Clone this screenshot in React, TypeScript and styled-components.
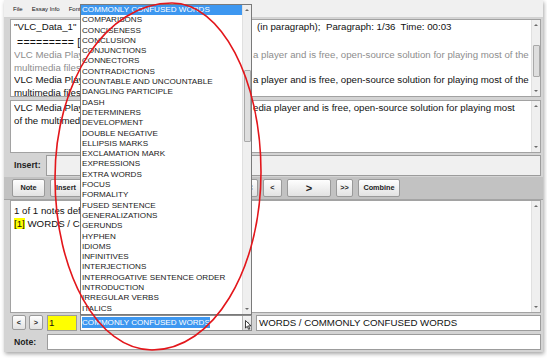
import React from 'react';
import styled, { createGlobalStyle } from 'styled-components';

const GlobalStyle = createGlobalStyle`
  html, body {
    margin: 0;
    padding: 0;
    background: #fff;
  }
  body {
    font-family: 'Liberation Sans', Arial, sans-serif;
  }
  * {
    box-sizing: border-box;
  }
`;

const Page = styled.div`
  position: relative;
  width: 547px;
  height: 358px;
  padding: 0 4px;
  overflow: hidden;
`;

const Window = styled.div`
  position: relative;
  display: flex;
  flex-direction: column;
  width: 539px;
  height: 352px;
  background: #d4d4d4;
  box-shadow: 1px 2px 4px rgba(0, 0, 0, 0.35);
`;

const MenuBar = styled.div`
  display: flex;
  align-items: center;
  gap: 9px;
  height: 18px;
  padding-left: 9px;
  background: #f0f0f0;
  border-bottom: 1px solid #d2d2d2;
  font-size: 6px;
  color: #111;
`;

const Content = styled.div`
  display: flex;
  flex-direction: column;
  padding: 1px 2px 0 6px;
`;

const Pane = styled.div<{ $h: number; $gap?: number }>`
  display: flex;
  height: ${(p) => p.$h}px;
  margin-top: ${(p) => p.$gap ?? 0}px;
  background: #fff;
  border: 1px solid #a2a2a2;
`;

const PaneText = styled.div<{ $pt: number }>`
  flex: 1;
  min-width: 0;
  overflow: hidden;
  padding: ${(p) => p.$pt}px 0 0 3px;
  font-size: 9.7px;
  line-height: 12.5px;
  color: #111;
`;

const Line = styled.div<{ $dim?: boolean; $mt?: number }>`
  white-space: pre;
  margin-top: ${(p) => p.$mt ?? 0}px;
  color: ${(p) => (p.$dim ? '#8d8d8d' : '#111')};
`;

const Rule = styled.span`
  font-size: 10.5px;
  letter-spacing: 0.2px;
`;

// start of a line that lies under the open drop-down; its width fixes where the rest begins
const Under = styled.span<{ $w: number }>`
  display: inline-block;
  width: ${(p) => p.$w}px;
  overflow: hidden;
  vertical-align: top;
`;

const Mark = styled.span`
  background: #ffff00;
`;

const ScrollBar = styled.div`
  display: flex;
  flex-direction: column;
  width: 9px;
  background: #efefef;
  border-left: 1px solid #e0e0e0;
`;

const ArrowCell = styled.div`
  display: flex;
  align-items: center;
  justify-content: center;
  height: 10px;
`;

const Tri = styled.span<{ $dir: 'up' | 'down' }>`
  width: 0;
  height: 0;
  border-left: 2px solid transparent;
  border-right: 2px solid transparent;
  ${(p) => (p.$dir === 'up' ? 'border-bottom: 2px solid #6a6a6a;' : 'border-top: 2px solid #6a6a6a;')}
`;

const Track = styled.div`
  flex: 1;
  display: flex;
  flex-direction: column;
  align-items: center;
`;

const Thumb = styled.div<{ $top: number; $h: number }>`
  margin-top: ${(p) => p.$top}px;
  width: 7px;
  height: ${(p) => p.$h}px;
  background: #dedede;
  border: 1px solid #a9a9a9;
  border-radius: 1px;
`;

const FieldRow = styled.div<{ $h: number }>`
  display: flex;
  align-items: center;
  height: ${(p) => p.$h}px;
`;

const Label = styled.span<{ $w: number }>`
  width: ${(p) => p.$w}px;
  padding-left: 4px;
  font-size: 8.7px;
  font-weight: bold;
  color: #222;
`;

const Field = styled.div<{ $h: number; $tone?: 'plain' | 'muted' | 'mark'; $w?: number }>`
  display: flex;
  align-items: center;
  ${(p) => (p.$w ? `width: ${p.$w}px;` : 'flex: 1;')}
  height: ${(p) => p.$h}px;
  padding-left: 1px;
  border: 1px solid #9c9c9c;
  background: ${(p) => (p.$tone === 'muted' ? '#f0f0f0' : p.$tone === 'mark' ? '#ffff00' : '#fff')};
  font-size: 9.7px;
  color: #111;
  white-space: nowrap;
  overflow: hidden;
`;

const ButtonRow = styled.div`
  display: flex;
  align-items: center;
  gap: 5px;
  height: 23px;
  margin: 0 -2px 0 -6px;
  padding: 0 0 1px 8px;
  background: #c2c2c2;
  border-bottom: 1px solid #a4a4a4;
`;

const Button = styled.button<{ $w: number; $h?: number; $big?: boolean }>`
  display: flex;
  align-items: center;
  justify-content: center;
  flex-shrink: 0;
  width: ${(p) => p.$w}px;
  height: ${(p) => p.$h ?? 18}px;
  padding: 0;
  border: 1px solid #9a9a9a;
  border-radius: 2px;
  background: linear-gradient(#fefefe, #e2e2e2);
  font-family: inherit;
  font-size: ${(p) => (p.$big ? 11 : 7.3)}px;
  font-weight: bold;
  color: #222;
`;

const NavButton = styled(Button)<{ $ml: number }>`
  margin-left: ${(p) => p.$ml}px;
`;

const Combo = styled.div`
  position: relative;
  display: flex;
  width: 172px;
  height: 16px;
  margin-left: 3px;
  border: 1px solid #8c8c8c;
  background: #fff;
`;

const ComboText = styled.div`
  flex: 1;
  display: flex;
  align-items: center;
  padding-left: 1px;
  font-size: 8.1px;
`;

const Selected = styled.span`
  background: #3d97f0;
  color: #fff;
  line-height: 11px;
`;

const ComboButton = styled.div`
  position: relative;
  display: flex;
  align-items: center;
  justify-content: center;
  width: 9px;
  background: linear-gradient(#f4f4f4, #dcdcdc);
  border-left: 1px solid #b4b4b4;
`;

const Cursor = styled.svg`
  position: absolute;
  left: 2px;
  top: 4px;
`;

const PageField = styled(Field)`
  margin-left: 4px;
`;

const PathField = styled(Field)`
  margin-left: 4px;
  padding-left: 2px;
`;

const DropList = styled.div`
  position: absolute;
  left: 76px;
  top: 4px;
  display: flex;
  width: 172px;
  height: 311px;
  background: #fff;
  border: 1px solid #7a7a7a;
`;

const Items = styled.div`
  flex: 1;
`;

const Item = styled.div<{ $on?: boolean }>`
  height: 10.3px;
  padding-left: 1px;
  font-size: 8.1px;
  line-height: 10.3px;
  white-space: nowrap;
  color: ${(p) => (p.$on ? '#fff' : '#1a1a1a')};
  background: ${(p) => (p.$on ? '#3d97f0' : 'transparent')};
`;

const Ring = styled.svg`
  position: absolute;
  left: 0;
  top: 0;
  pointer-events: none;
`;

const topics = [
  'COMMONLY CONFUSED WORDS',
  'COMPARISONS',
  'CONCISENESS',
  'CONCLUSION',
  'CONJUNCTIONS',
  'CONNECTORS',
  'CONTRADICTIONS',
  'COUNTABLE AND UNCOUNTABLE',
  'DANGLING PARTICIPLE',
  'DASH',
  'DETERMINERS',
  'DEVELOPMENT',
  'DOUBLE NEGATIVE',
  'ELLIPSIS MARKS',
  'EXCLAMATION MARK',
  'EXPRESSIONS',
  'EXTRA WORDS',
  'FOCUS',
  'FORMALITY',
  'FUSED SENTENCE',
  'GENERALIZATIONS',
  'GERUNDS',
  'HYPHEN',
  'IDIOMS',
  'INFINITIVES',
  'INTERJECTIONS',
  'INTERROGATIVE SENTENCE ORDER',
  'INTRODUCTION',
  'IRREGULAR VERBS',
  'ITALICS',
];

const toolButtons = [
  { label: 'Note', w: 33 },
  { label: 'Insert', w: 32 },
  { label: 'Delete', w: 36 },
  { label: 'Clear', w: 34 },
  { label: 'Undo', w: 34 },
  { label: 'Redo', w: 28 },
  { label: '<<', w: 19 },
  { label: '<', w: 19 },
  { label: '>', w: 44, big: true },
  { label: '>>', w: 17 },
  { label: 'Combine', w: 42 },
];

const Scroll = ({ thumb }: { thumb?: [number, number] }) => (
  <ScrollBar>
    <ArrowCell>
      <Tri $dir="up" />
    </ArrowCell>
    <Track>{thumb && <Thumb $top={thumb[0]} $h={thumb[1]} />}</Track>
    <ArrowCell>
      <Tri $dir="down" />
    </ArrowCell>
  </ScrollBar>
);

const App = () => {
  return (
    <Page>
      <GlobalStyle />
      <Window>
        <MenuBar>
          <span>File</span>
          <span>Essay Info</span>
          <span>Font</span>
        </MenuBar>

        <Content>
          <Pane $h={78}>
            <PaneText $pt={1}>
              <Line>
                <Under $w={243}>"VLC_Data_1"</Under>
                {'(in paragraph);  Paragraph: 1/36  Time: 00:03'}
              </Line>
              <Line $mt={2}>
                <Rule> ========= [</Rule>
              </Line>
              <Line $dim>
                <Under $w={239}>VLC Media Player</Under>
                a player and is free, open-source solution for playing most of the
              </Line>
              <Line $dim>multimedia files</Line>
              <Line>
                <Under $w={239}>VLC Media Player</Under>
                a player and is free, open-source solution for playing most of the
              </Line>
              <Line>multimedia files</Line>
            </PaneText>
            <Scroll thumb={[15, 32]} />
          </Pane>

          <Pane $h={53} $gap={3}>
            <PaneText $pt={1}>
              <Line>
                <Under $w={239}>VLC Media Player</Under>
                edia player and is free, open-source solution for playing most
              </Line>
              <Line>of the multimedia</Line>
            </PaneText>
            <Scroll />
          </Pane>

          <FieldRow $h={24}>
            <Label $w={36}>Insert:</Label>
            <Field $h={21} $tone="muted" />
          </FieldRow>

          <ButtonRow>
            {toolButtons.map((b) => (
              <Button key={b.label} $w={b.w} $big={b.big}>
                {b.label}
              </Button>
            ))}
          </ButtonRow>

          <Pane $h={113}>
            <PaneText $pt={4}>
              <Line>1 of 1 notes defined</Line>
              <Line>
                <Mark>[1]</Mark> WORDS / COMMONLY
              </Line>
            </PaneText>
            <Scroll />
          </Pane>

          <FieldRow $h={19}>
            <NavButton $w={14} $h={15} $ml={2}>
              {'<'}
            </NavButton>
            <NavButton $w={14} $h={15} $ml={3}>
              {'>'}
            </NavButton>
            <PageField $h={16} $w={30} $tone="mark">
              1
            </PageField>
            <Combo>
              <ComboText>
                <Selected>COMMONLY CONFUSED WORDS</Selected>
              </ComboText>
              <ComboButton>
                <Tri $dir="down" />
                <Cursor width="7" height="10" viewBox="0 0 7 10">
                  <path d="M0.5 0.5 L0.5 8 L2.3 6.3 L3.6 9.3 L4.8 8.8 L3.5 5.8 L6 5.8 Z" fill="#fff" stroke="#111" strokeWidth="0.8" />
                </Cursor>
              </ComboButton>
            </Combo>
            <PathField $h={16}>WORDS / COMMONLY CONFUSED WORDS</PathField>
          </FieldRow>

          <FieldRow $h={19}>
            <Label $w={37}>Note:</Label>
            <Field $h={16} />
          </FieldRow>
        </Content>

        <DropList>
          <Items>
            {topics.map((t, i) => (
              <Item key={t} $on={i === 0}>
                {t}
              </Item>
            ))}
          </Items>
          <Scroll thumb={[55, 72]} />
        </DropList>
      </Window>

      <Ring width="547" height="358" viewBox="0 0 547 358">
        <path
          d="M172 3 C221 3 261 79 261 172 C261 270 213 350 152 350 C98 350 55 273 55 178 C55 81 106 3 172 3 Z"
          fill="none"
          stroke="#e3161b"
          strokeWidth="1.6"
        />
      </Ring>
    </Page>
  );
};

export default App;
